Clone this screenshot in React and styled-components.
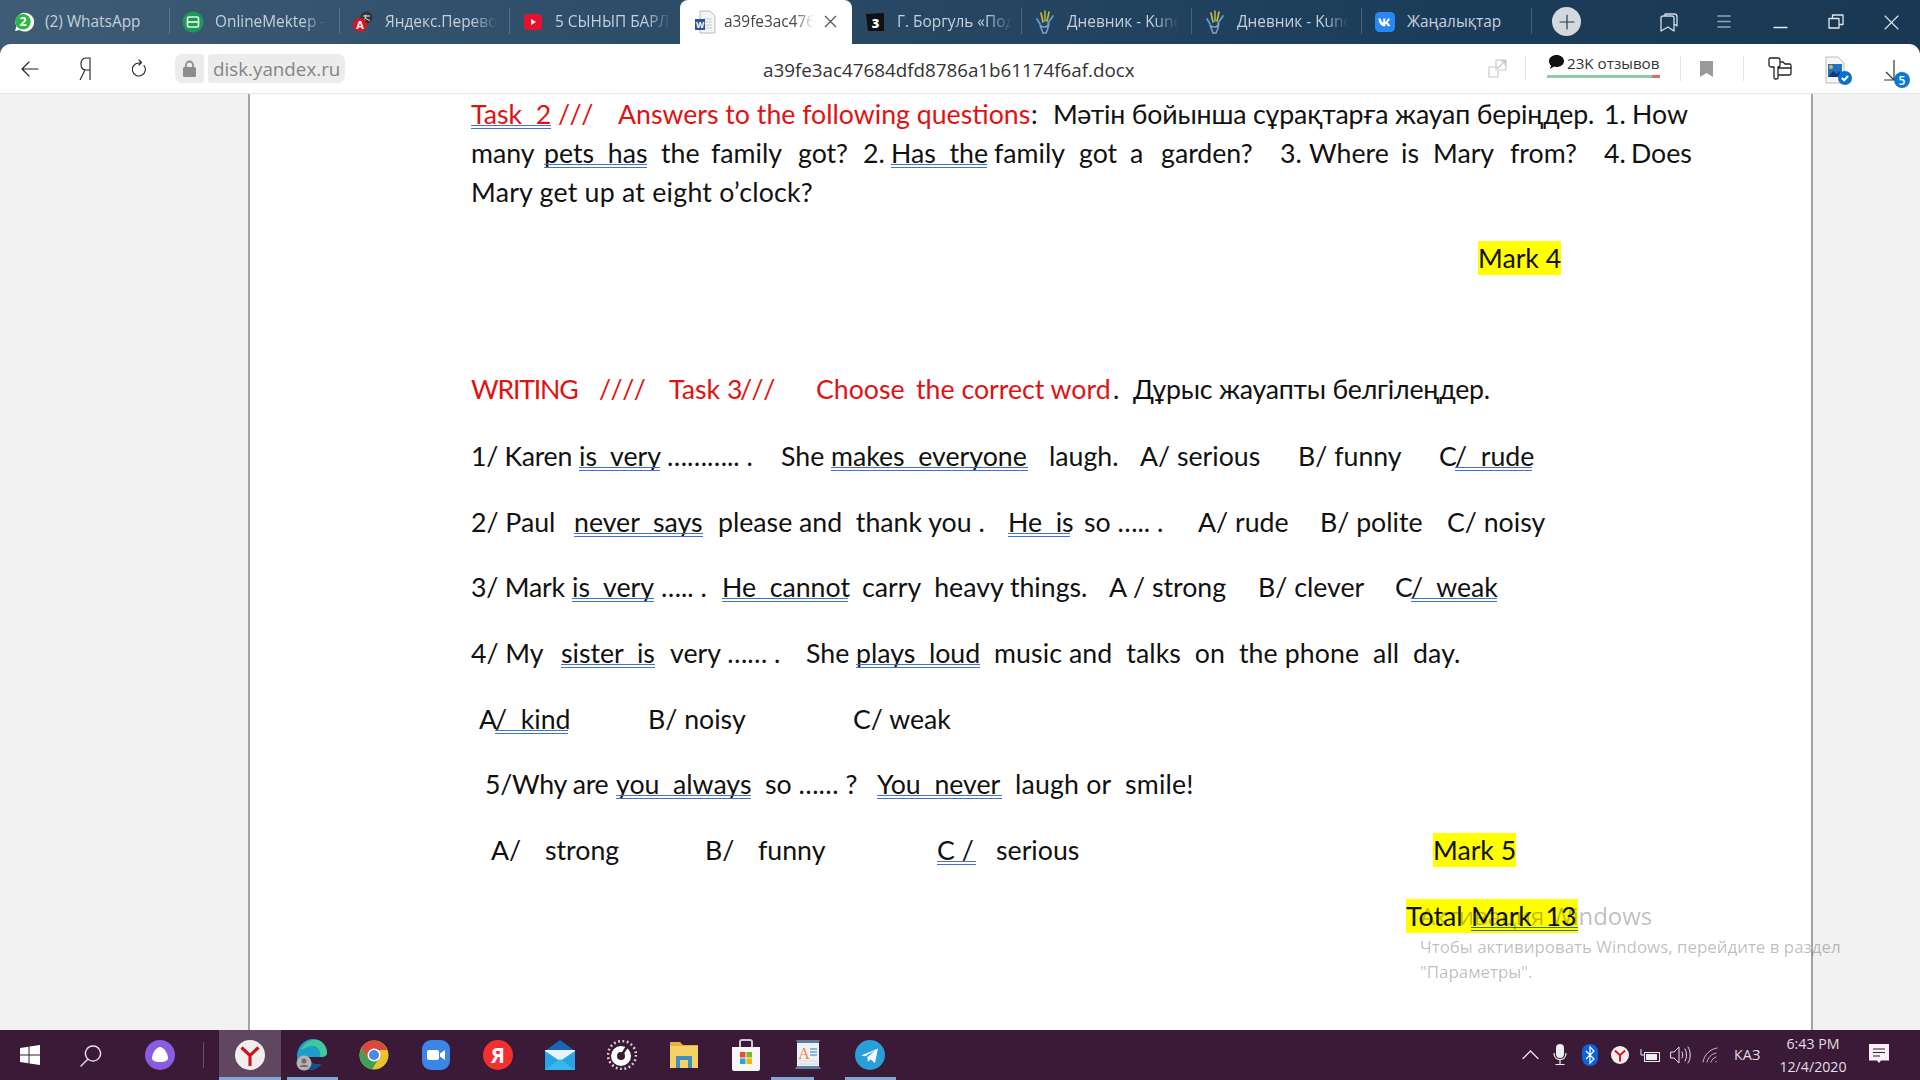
import React from "react";
import styled, { createGlobalStyle, css } from "styled-components";

const Global = createGlobalStyle`
  html, body { margin: 0; padding: 0; width: 1920px; height: 1080px; overflow: hidden; background: #fff; }
  #root { width: 1920px; height: 1080px; }
`;

const Shell = styled.div`
  position: relative; width: 1920px; height: 1080px; overflow: hidden;
  font-family: "Open Sans", "Noto Sans", sans-serif;
  background: linear-gradient(100deg, #3f5c76 0%, #2a4a66 35%, #1b3c59 70%, #1a3853 92%, #232c36 100%);
`;

/* ---------- tab strip ---------- */
const TabBar = styled.div`position: absolute; left: 0; top: 0; width: 1920px; height: 44px; display: flex;`;
const Tab = styled.div`
  position: relative; flex: 0 0 170px; height: 44px; box-sizing: border-box; padding-left: 12px;
  display: flex; align-items: center; gap: 11px; color: #c4d0da; font-size: 15.4px;
  ${p => p.$active && css`
    flex-basis: 172px; background: #fff; color: #444; border-radius: 8px 8px 0 0;
    padding-left: 14px; gap: 8px;
  `}
  ${p => !p.$active && !p.$noSep && css`
    &::after { content: ""; position: absolute; right: 0; top: 8px; height: 26px; width: 1px; background: rgba(255,255,255,.18); }
  `}
`;
const TabIcon = styled.span`flex: 0 0 22px; height: 22px; display: flex; align-items: center; justify-content: center;`;
const TabTitle = styled.span`
  width: ${p => p.$w || 112}px; white-space: nowrap; overflow: hidden; line-height: 22px;
  ${p => p.$fade && css`
    mask-image: linear-gradient(90deg, #000 78%, transparent 100%);
    -webkit-mask-image: linear-gradient(90deg, #000 78%, transparent 100%);
  `}
`;
const TabClose = styled.span`position: absolute; left: 144px; top: 15px; width: 13px; height: 13px; display: flex;`;
const StripIcon = styled.span`position: absolute; left: ${p => p.$x}px; top: ${p => p.$y}px; display: flex;`;
const NewTab = styled.span`
  position: absolute; left: 1552px; top: 7px; width: 29px; height: 29px; border-radius: 50%;
  background: #d3d8dd; display: flex; align-items: center; justify-content: center;
`;

/* ---------- tool bar ---------- */
const Toolbar = styled.div`
  position: absolute; left: 0; top: 44px; width: 1920px; height: 50px; background: #fff;
  border-radius: 11px 11px 0 0; box-sizing: border-box; border-bottom: 1px solid #e6e6e6;
`;
const ToolIcon = styled.span`position: absolute; left: ${p => p.$x}px; top: ${p => p.$y}px; display: flex;`;
const LockPill = styled.span`
  position: absolute; left: 175px; top: 10px; width: 29px; height: 29px; background: #ececec;
  border-radius: 7px 3px 3px 7px; display: flex; align-items: center; justify-content: center;
`;
const DomainPill = styled.span`
  position: absolute; left: 208px; top: 10px; width: 137px; height: 29px; background: #ececec;
  border-radius: 3px 7px 7px 3px; color: #858585; font-size: 18.8px; line-height: 31px; padding-left: 5px; box-sizing: border-box;
`;
const DocName = styled.span`position: absolute; left: 763px; top: 12px; font-size: 18.8px; line-height: 28px; color: #333; white-space: nowrap;`;
const ToolSep = styled.span`position: absolute; left: ${p => p.$x}px; top: 12px; width: 1px; height: 25px; background: #e5e5e5;`;
const Reviews = styled.span`position: absolute; left: 1567px; top: 8px; font-size: 15.2px; line-height: 22px; color: #333; white-space: nowrap;`;
const RatingBar = styled.span`
  position: absolute; left: 1547px; top: 31px; width: 113px; height: 3px;
  background: linear-gradient(90deg, #8ecba5 0 93%, #e46a6a 93% 100%);
`;

/* ---------- page ---------- */
const Viewport = styled.div`position: absolute; left: 0; top: 94px; width: 1920px; height: 936px; background: #f2f2f2;`;
const Page = styled.div`
  position: absolute; left: 248px; top: 0; width: 1565px; height: 936px; box-sizing: border-box;
  background: #fff; border-left: 2px solid #a4a4a4; border-right: 2px solid #a4a4a4;
`;
const Doc = styled.div`position: absolute; left: 0; top: 94px; width: 1920px; height: 936px; font-family: Lato, "Noto Sans", sans-serif; font-size: 26.7px; color: #111;`;
const Line = styled.div`position: absolute; left: 0; top: ${p => p.$c - 17 - 94}px; width: 1920px; height: 34px; line-height: 34px;`;
const Seg = styled.span`
  position: absolute; left: ${p => p.$x}px; top: 0; height: 34px; white-space: pre;
  ${p => p.$w && css`width: ${p.$w}px;`}
  ${p => p.$ls && css`letter-spacing: ${p.$ls}px;`}
  ${p => p.$red && css`color: #e11212;`}
  ${p => p.$hl && css`background: #ffff00;`}
  ${p => p.$sl && css`font-kerning: none; letter-spacing: -0.5px;`}
  ${p => p.$ul && css`
    &::after {
      content: ""; position: absolute; left: 0; right: 0; top: 28px; height: 0;
      border-bottom: 4px double ${p.$hl ? "#3d6e78" : "#4472c4"};
    }
  `}
`;
const Watermark = styled.div`position: absolute; left: 1420px; font-family: "Open Sans", "Noto Sans", sans-serif; color: rgba(0,0,0,.27); white-space: nowrap; pointer-events: none;`;
const WmTitle = styled(Watermark)`top: 805px; font-size: 23.9px; line-height: 34px;`;
const WmText = styled(Watermark)`top: 840px; font-size: 16.9px; line-height: 25px;`;

/* ---------- task bar ---------- */
const Taskbar = styled.div`position: absolute; left: 0; top: 1030px; width: 1920px; height: 50px; background: #3b1a37;`;
const Pinned = styled.div`position: absolute; left: 219px; top: 0; height: 50px; display: flex;`;
const Slot = styled.span`
  position: relative; flex: 0 0 62px; height: 50px; display: flex; align-items: center; justify-content: center;
  ${p => p.$on && css`background: #61465f;`}
  ${p => p.$bar && css`
    &::after { content: ""; position: absolute; left: ${p.$barLeft || 0}px; bottom: 0; height: 3px; width: ${p.$bar}px; background: #7fa8d6; }
  `}
`;
const SysIcon = styled.span`position: absolute; left: ${p => p.$x}px; top: ${p => p.$y}px; display: flex;`;
const TaskSep = styled.span`position: absolute; left: 203px; top: 12px; width: 1px; height: 26px; background: #6c5068;`;
const Lang = styled.span`position: absolute; left: 1734px; top: 12px; color: #e4dce3; font-size: 14.4px; line-height: 26px;`;
const Clock = styled.div`position: absolute; left: 1768px; top: 2px; width: 90px; text-align: center; color: #e4dce3; font-size: 14.2px; line-height: 23px;`;

/* ---------- drawings ---------- */
const Whats = () => <svg width="22" height="22" viewBox="0 0 22 22"><path d="M3 20l1.4-4.6A9.4 9.4 0 1 1 7.6 19z" fill="#fff"/><circle cx="11" cy="10.8" r="7.7" fill="#2cb742"/><text x="11" y="15.2" textAnchor="middle" fontSize="12.5" fontWeight="700" fill="#fff" fontFamily="Open Sans">2</text></svg>;
const Online = () => <svg width="22" height="22" viewBox="0 0 22 22"><circle cx="11" cy="11" r="10.5" fill="#1d9a58"/><rect x="5.5" y="6" width="11" height="10" rx="1.5" fill="none" stroke="#dff3e6" strokeWidth="1.7"/><path d="M5.5 11h11" stroke="#dff3e6" strokeWidth="1.7"/></svg>;
const Translate = () => <svg width="22" height="22" viewBox="0 0 22 22"><circle cx="14.5" cy="6.5" r="6" fill="#333"/><path d="M11 5h7M14 3.500c0 3-1 5-3 6M13 6c1 2 3 3 5 3.500" fill="none" stroke="#eee" strokeWidth="1"/><circle cx="8" cy="14" r="7" fill="#d8141f"/><text x="8" y="18" textAnchor="middle" fontSize="11" fontWeight="700" fill="#fff" fontFamily="Open Sans">A</text></svg>;
const YouTube = () => <svg width="20" height="18" viewBox="0 0 20 18"><rect x="1" y="1" width="18" height="16" rx="4" fill="#e8112d"/><path d="M8 6l5 3-5 3z" fill="#fff"/></svg>;
const WordDoc = () => <svg width="22" height="24" viewBox="0 0 22 24"><path d="M6 1h10l5 5v17H6z" fill="#f5f5f5" stroke="#b9b9b9"/><path d="M9 9h9M9 12h9M9 15h9M9 18h9" stroke="#c9c9c9"/><rect x="1" y="9" width="10" height="11" fill="#2b579a"/><text x="6" y="18" textAnchor="middle" fontSize="8.5" fontWeight="700" fill="#fff" fontFamily="Open Sans">W</text></svg>;
const Black3 = () => <svg width="20" height="20" viewBox="0 0 20 20"><path d="M1 2l18-1v18H3z" fill="#111"/><text x="10.5" y="15.5" textAnchor="middle" fontSize="13" fontWeight="800" fill="#fff" fontFamily="Open Sans">3</text></svg>;
const Hand = () => <svg width="20" height="24" viewBox="0 0 20 24"><path d="M6 3l2 9M14 2l-2 9" stroke="#d8b528" strokeWidth="1.700" strokeLinecap="round"/><path d="M10 1v10" stroke="#8fb36a" strokeWidth="1.700" strokeLinecap="round"/><path d="M18 6l-5 7M2 9l3 5" stroke="#59a6d6" strokeWidth="1.700" strokeLinecap="round"/><path d="M5 15c2 3 8 3 9-2-1 5-1 7-3 10H8C7 20 6 18 5 15z" fill="none" stroke="#7e9fc4" strokeWidth="1.6"/></svg>;
const Vk = () => <svg width="20" height="20" viewBox="0 0 20 20"><rect width="20" height="20" rx="4.5" fill="#2787f5"/><path d="M3.5 6.5h2.4c.3 2.6 1.4 4 2.3 4.2V6.5h2.2v3.3c.9-.1 1.9-1.5 2.3-3.3h2.2c-.4 2-1.6 3.500-2.500 4.100 1 .5 2.300 1.700 2.900 3.700h-2.500c-.5-1.500-1.500-2.400-2.400-2.500v2.500H10C6 14.300 3.700 11.300 3.500 6.500z" fill="#fff"/></svg>;
const Stroke = ({ w, h, d, c = "#222", sw = 1.3 }) => <svg width={w} height={h} viewBox={`0 0 ${w} ${h}`}><path d={d} fill="none" stroke={c} strokeWidth={sw} strokeLinecap="round" strokeLinejoin="round"/></svg>;

const Star = () => <svg width="13" height="13" viewBox="0 0 13 13"><path d="M1 1l11 11M12 1L1 12" stroke="#555" strokeWidth="1.2"/></svg>;
const DocThumb = () => <svg width="30" height="30" viewBox="0 0 30 30"><path d="M3 2h12l6 6v20H3z" fill="#f6f6f6" stroke="#bbb"/><rect x="5" y="9" width="14" height="13" fill="#1f72c4"/><path d="M5 22l5-6 4 3 2-3 3 6z" fill="#0d3f75"/><circle cx="8" cy="12" r="2" fill="#e8b04a"/><circle cx="22" cy="23" r="7" fill="#0b6fcf"/><path d="M18.800 23l2.300 2.300 4-4.300" fill="none" stroke="#fff" strokeWidth="2"/></svg>;
const DownloadBadge = () => <svg width="28" height="30" viewBox="0 0 28 30"><path d="M11 1v20M3 13l8 8 8-8M1 21h10" fill="none" stroke="#333" strokeWidth="1.2"/><circle cx="19" cy="21" r="8" fill="#0b78d8"/><text x="19" y="25.500" textAnchor="middle" fontSize="12" fontWeight="600" fill="#fff" fontFamily="Open Sans">5</text></svg>;
const Bubble = () => <svg width="15" height="14" viewBox="0 0 15 14"><path d="M7.500 0C11.500 0 15 2.400 15 6s-3.500 6-7.500 6c-1 0-1.800-.1-2.500-.4L1 14l1-3.500C.7 9.500 0 7.800 0 6 0 2.400 3.500 0 7.500 0z" fill="#111"/></svg>;

const YRound = ({ s = 30 }) => <svg width={s} height={s} viewBox="0 0 30 30"><circle cx="15" cy="15" r="15" fill="#f2eeee"/><path d="M6.500 7.500L15 15.500 23.500 7.500M15 15.500V26" fill="none" stroke="#c9151e" strokeWidth="3.100"/></svg>;
const AppIcons = {
  edge: <svg width="32" height="32" viewBox="0 0 32 32"><path d="M1 17C1 7 9 0 17 0c9 0 14 7 14 14 0 3-3 4-7 4H13c0 5 5 9 12 7-3 4-7 6-11 6C7 31 1 25 1 17z" fill="#1f9dc9"/><path d="M5 11C8 4 15 0 21 1c6 1 10 7 10 13 0 3-3 4-7 4 2-7-4-12-9-11-4 1-8 3-10 4z" fill="#42c99a"/><path d="M13 18c0 5 5 9 12 7-3 4-7 6-11 6-4 0-8-3-9-7 3 0 6-2 8-6z" fill="#104f95"/><circle cx="8" cy="24" r="7.500" fill="#b7b2b4"/><circle cx="8" cy="22" r="2.500" fill="#6f6b70"/><path d="M3.500 28c1-3 8-3 9 0z" fill="#6f6b70"/></svg>,
  chrome: <svg width="30" height="30" viewBox="0 0 30 30"><circle cx="15" cy="15" r="14.500" fill="#eac12f"/><path d="M15 .5A14.500 14.500 0 0 0 2.500 8L9 19l6-9h13.200A14.500 14.500 0 0 0 15 .5z" fill="#d9483b"/><path d="M2.500 8A14.500 14.500 0 0 0 13 29.500L20 18 9 19z" fill="#3ea055"/><circle cx="15" cy="15" r="6.500" fill="#fff"/><circle cx="15" cy="15" r="5" fill="#4a88e8"/></svg>,
  zoom: <svg width="28" height="30" viewBox="0 0 28 30"><rect width="28" height="30" rx="9" fill="#3a85e6"/><rect x="5" y="10" width="12" height="10" rx="2" fill="#fff"/><path d="M18 13.500l5-3.500v10l-5-3.500z" fill="#fff"/></svg>,
  ya: <svg width="30" height="30" viewBox="0 0 30 30"><circle cx="15" cy="15" r="15" fill="#f23030"/><text x="15" y="22.500" textAnchor="middle" fontSize="21" fontWeight="700" fill="#fff" fontFamily="Open Sans">Я</text></svg>,
  mail: <svg width="32" height="30" viewBox="0 0 32 30"><path d="M1 11L16 0l15 11-15 9z" fill="#1568b5"/><rect x="1" y="10" width="30" height="20" fill="#27a4e3"/><path d="M1 11l15 10 15-10v-1H1z" fill="#e9f5fb"/><path d="M1 30l15-11 15 11z" fill="#3bb6ec"/></svg>,
  gauge: <svg width="30" height="30" viewBox="0 0 30 30"><circle cx="15" cy="15" r="14" fill="none" stroke="#d9d3d9" strokeWidth="2.600" strokeDasharray="1.800 2.600"/><circle cx="14" cy="16" r="10" fill="#fff"/><circle cx="14" cy="16" r="4" fill="#3b1a37"/><path d="M14 16L21 5" stroke="#3b1a37" strokeWidth="2.500"/></svg>,
  folder: <svg width="30" height="28" viewBox="0 0 30 28"><path d="M1 1h10l3 3h15v23H1z" fill="#e9b040"/><rect x="1" y="5" width="28" height="22" fill="#f6d265"/><path d="M7 27V15h16v12h-4v-8h-8v8z" fill="#3d8fc4"/></svg>,
  store: <svg width="30" height="32" viewBox="0 0 30 32"><path d="M9 9V3c0-1 1-2 2-2h8c1 0 2 1 2 2v6" fill="none" stroke="#cfc9cf" strokeWidth="2"/><path d="M1 8h28v22c0 1-1 2-2 2H3c-1 0-2-1-2-2z" fill="#f7f7f7"/><rect x="9" y="13" width="5.500" height="5.500" fill="#e8502a"/><rect x="15.500" y="13" width="5.500" height="5.500" fill="#76b82a"/><rect x="9" y="19.500" width="5.500" height="5.500" fill="#27a4e3"/><rect x="15.500" y="19.500" width="5.500" height="5.500" fill="#f4b400"/></svg>,
  app: <svg width="26" height="30" viewBox="0 0 26 30"><path d="M1 0h24l-1 2v24l2 3H0l2-3V2z" fill="#5f7c9c"/><rect x="2" y="3" width="22" height="23" fill="#eef2f6"/><text x="9" y="19" textAnchor="middle" fontSize="16" fontFamily="Liberation Serif" fill="#e58a3a">A</text><path d="M15 9h7M15 12h7M15 15h7" stroke="#6ea3d4" strokeWidth="1.500"/><path d="M3 21h20M3 24h20" stroke="#cfd8e2"/></svg>,
  tg: <svg width="30" height="30" viewBox="0 0 30 30"><circle cx="15" cy="15" r="15" fill="#2a9ed8"/><path d="M6 15.500L23 8.500l-3 14.500-4.500-3.500-2.500 2.300-.8-4.500 8-7-10 6z" fill="#f2f8fb"/></svg>,
};

const p = v => Math.round(v * 1.2245);

const lines = [
  [93, [
    { x: 385, w: 65, t: "Task  2", red: 1, ul: 1 }, { x: 456, t: "///", red: 1, sl: 1 }, { x: 505, t: "Answers to the following questions", red: 1 },
    { x: 842, t: ":" }, { x: 860, t: "Мәтін бойынша сұрақтарға жауап беріңдер.", ls: -0.15 }, { x: 1310, t: "1." }, { x: 1333, t: "How" },
  ]],
  [125, [
    { x: 385, t: "many" }, { x: 444, w: 84, t: "pets  has", ul: 1 }, { x: 540, t: "the" }, { x: 581, t: "family" }, { x: 652, t: "got?" },
    { x: 705, t: "2." }, { x: 728, w: 78, t: "Has  the", ul: 1 }, { x: 812, t: "family" }, { x: 881, t: "got" }, { x: 923, t: "a" }, { x: 948, t: "garden?" },
    { x: 1045, t: "3." }, { x: 1069, t: "Where" }, { x: 1144, t: "is" }, { x: 1170, t: "Mary" }, { x: 1233, t: "from?" }, { x: 1310, t: "4." }, { x: 1332, t: "Does" },
  ]],
  [157, [{ x: 385, t: "Mary get up at eight o’clock?", ls: 0.25 }]],
  [211, [{ x: 1207, w: 68, t: "Mark 4", hl: 1 }]],
  [318, [
    { x: 385, t: "WRITING", red: 1, ls: -1.2 }, { x: 489, t: "////", red: 1, sl: 1 }, { x: 546, t: "Task 3", red: 1 }, { x: 604, t: "///", red: 1, sl: 1 }, { x: 666, t: "Choose", red: 1 }, { x: 748, t: "the correct word", red: 1 },
    { x: 909, t: "." }, { x: 925, t: "Дұрыс жауапты белгілеңдер.", ls: -0.23 },
  ]],
  [372, [
    { x: 385, t: "1/ Karen", ls: -0.3 }, { x: 473, w: 66, t: "is  very", ul: 1 }, { x: 545, t: "……….. ." }, { x: 638, t: "She" }, { x: 679, w: 161, t: "makes  everyone", ul: 1 },
    { x: 857, t: "laugh." }, { x: 931, t: "A/ serious" }, { x: 1060, t: "B/ funny" }, { x: 1175, t: "C" }, { x: 1188, w: 63, t: "/  rude", ul: 1 },
  ]],
  [426, [
    { x: 385, t: "2/ Paul" }, { x: 469, w: 105, t: "never  says", ul: 1 }, { x: 586, t: "please and  thank you ." }, { x: 823, w: 51, t: "He  is", ul: 1 },
    { x: 885, t: "so ….. ." }, { x: 978, t: "A/ rude" }, { x: 1078, t: "B/ polite" }, { x: 1182, t: "C/ noisy" },
  ]],
  [479, [
    { x: 385, t: "3/ Mark", ls: -0.2 }, { x: 467, w: 67, t: "is  very", ul: 1 }, { x: 540, t: "….. ." }, { x: 590, w: 103, t: "He  cannot", ul: 1 }, { x: 704, t: "carry  heavy things." },
    { x: 906, t: "A / strong" }, { x: 1027, t: "B/ clever" }, { x: 1139, t: "C" }, { x: 1152, w: 70, t: "/  weak", ul: 1 },
  ]],
  [533, [
    { x: 385, t: "4/ My" }, { x: 458, w: 77, t: "sister  is", ul: 1 }, { x: 547, t: "very …… ." }, { x: 658, t: "She" }, { x: 699, w: 101, t: "plays  loud", ul: 1 },
    { x: 812, t: "music and  talks  on  the phone  all  day.", ls: 0.1 },
  ]],
  [587, [{ x: 391, t: "A" }, { x: 404, w: 60, t: "/  kind", ul: 1 }, { x: 529, t: "B/ noisy" }, { x: 697, t: "C/ weak" }]],
  [640, [
    { x: 396, t: "5/Why are", ls: -0.3 }, { x: 503, w: 110, t: "you  always", ul: 1 }, { x: 625, t: "so …… ?" }, { x: 716, w: 102, t: "You  never", ul: 1 }, { x: 829, t: "laugh or  smile!", ls: 0.2 },
  ]],
  [694, [
    { x: 401, t: "A/" }, { x: 445, t: "strong" }, { x: 576, t: "B/" }, { x: 619, t: "funny" }, { x: 765, w: 32, t: "C /", ul: 1 }, { x: 813, t: "serious" }, { x: 1170, w: 68, t: "Mark 5", hl: 1 },
  ]],
  [748, [{ x: 1148, w: 53, t: "Total", hl: 1 }, { x: 1201, w: 87, t: "Mark  13", hl: 1, ul: 1 }]],
];

const tabs = [
  { icon: <Whats />, title: "(2) WhatsApp" },
  { icon: <Online />, title: "OnlineMektep - Онлайн", fade: 1 },
  { icon: <Translate />, title: "Яндекс.Переводчик", fade: 1 },
  { icon: <YouTube />, title: "5 СЫНЫП БАРЛЫҚ", fade: 1, noSep: 1, w: 116 },
  { icon: <WordDoc />, title: "a39fe3ac47684", fade: 1, w: 90, active: 1 },
  { icon: <Black3 />, title: "Г. Боргуль «Подарок", fade: 1, w: 115 },
  { icon: <Hand />, title: "Дневник - Kundelik", fade: 1 },
  { icon: <Hand />, title: "Дневник - Kundelik", fade: 1 },
  { icon: <Vk />, title: "Жаңалықтар" },
];

export default function App() {
  return (
    <Shell>
      <Global />
      <TabBar>
        {tabs.map((t, i) => (
          <Tab key={i} $active={t.active} $noSep={t.noSep}>
            <TabIcon>{t.icon}</TabIcon>
            <TabTitle $fade={t.fade} $w={t.w}>{t.title}</TabTitle>
            {t.active && <TabClose><Star /></TabClose>}
          </Tab>
        ))}
        <NewTab><Stroke w={18} h={18} d="M9 2v14M2 9h14" c="#2d3b48" sw={1.2} /></NewTab>
        <StripIcon $x={1660} $y={11}><Stroke w={20} h={22} c="#d5dde4" d="M5 5V3h9c1.500 0 3 .8 3 2.500V15l-2-1.500M1 7c0-1 1-2 2-2h9c1 0 2 1 2 2v13l-6-4-7 4z" /></StripIcon>
        <StripIcon $x={1717} $y={14}><Stroke w={14} h={15} c="#91a7b7" sw={1.6} d="M1 2h12M1 7.500h12M1 13h12" /></StripIcon>
        <StripIcon $x={1773} $y={26}><Stroke w={15} h={3} c="#e2e8ec" d="M1 1.500h13" /></StripIcon>
        <StripIcon $x={1828} $y={14}><Stroke w={16} h={15} c="#e2e8ec" d="M1 4.500h10V14H1zM4.500 4.500V1H15v9.500h-4" /></StripIcon>
        <StripIcon $x={1884} $y={15}><Stroke w={15} h={15} c="#e2e8ec" sw={1.1} d="M1 1l13 13M14 1L1 14" /></StripIcon>
      </TabBar>

      <Toolbar>
        <ToolIcon $x={20} $y={16}><Stroke w={19} h={18} d="M18 9H2M9 2L2 9l7 7" sw={1.1} /></ToolIcon>
        <ToolIcon $x={79} $y={13}><svg width="12" height="24" viewBox="0 0 12 24"><path d="M11 23V1H7C3.500 1 2 4 2 7s1.500 6 5 6h4M6 13L1 23" fill="none" stroke="#222" strokeWidth="1.100"/></svg></ToolIcon>
        <ToolIcon $x={132} $y={15}><Stroke w={16} h={19} d="M7 1l2.500 2.500L7 6M12 6.500A6.500 6.500 0 1 1 6.500 4H9" sw={1.1} /></ToolIcon>
        <LockPill><svg width="13" height="17" viewBox="0 0 13 17"><path d="M3 8V5a3.500 3.500 0 0 1 7 0v3" fill="none" stroke="#8c8c8c" strokeWidth="1.800"/><rect y="7" width="13" height="10" rx="1.500" fill="#8c8c8c"/></svg></LockPill>
        <DomainPill>disk.yandex.ru</DomainPill>
        <DocName>a39fe3ac47684dfd8786a1b61174f6af.docx</DocName>
        <ToolIcon $x={1488} $y={15}><Stroke w={19} h={19} c="#c6c6c6" d="M1 8h9v10H1zM8 11V1h10v10h-6M11 8l6-6M13 2h4v4" sw={1.100} /></ToolIcon>
        <ToolSep $x={1525} />
        <ToolIcon $x={1549} $y={11}><Bubble /></ToolIcon>
        <Reviews>23K отзывов</Reviews>
        <RatingBar />
        <ToolSep $x={1680} />
        <ToolIcon $x={1700} $y={17}><svg width="13" height="16" viewBox="0 0 13 16"><path d="M0 0h13v16l-6.500-4L0 16z" fill="#9a9a9a"/></svg></ToolIcon>
        <ToolSep $x={1743} />
        <ToolIcon $x={1768} $y={13}><Stroke w={24} h={23} c="#222" d="M2 1h8c1 0 2 1 2 2v5c0 1-1 2-2 2v11c0 1-1 1-2 1H7c-1 0-1-1-1-2V10H3C2 10 1 9 1 8V3c0-1 0-2 1-2zM12 5h3l2 2h5c1 0 1 1 1 2v7c0 1-1 2-2 2H10M11 11h12" /></ToolIcon>
        <ToolIcon $x={1823} $y={11}><DocThumb /></ToolIcon>
        <ToolIcon $x={1883} $y={15}><DownloadBadge /></ToolIcon>
      </Toolbar>

      <Viewport><Page /></Viewport>

      <Doc>
        {lines.map(([y, segs]) => (
          <Line key={y} $c={p(y)}>
            {segs.map((s, i) => (
              <Seg key={i} $x={p(s.x)} $w={s.w ? p(s.w) : undefined} $ls={s.ls} $red={s.red} $ul={s.ul} $hl={s.hl} $sl={s.sl}>{s.t}</Seg>
            ))}
          </Line>
        ))}
        <WmTitle>Активация Windows</WmTitle>
        <WmText>Чтобы активировать Windows, перейдите в раздел<br />"Параметры".</WmText>
      </Doc>

      <Taskbar>
        <SysIcon $x={20} $y={15}><svg width="20" height="20" viewBox="0 0 20 20"><path d="M0 3l8.500-1.200V9.500H0zM9.500 1.600L20 0v9.500H9.500zM0 10.500h8.500v7.700L0 17zM9.500 10.500H20V20L9.500 18.400z" fill="#fff"/></svg></SysIcon>
        <SysIcon $x={80} $y={15}><Stroke w={22} h={22} c="#e8e4e8" d="M13 1a7.500 7.500 0 1 1-.01 0zM8 14L1 21" sw={1.400} /></SysIcon>
        <SysIcon $x={145} $y={10}><svg width="30" height="30" viewBox="0 0 30 30"><circle cx="15" cy="15" r="15" fill="#8a5de0"/><path d="M15 7c4 0 8 7 8 11 0 3-4 4-8 4s-8-1-8-4c0-4 4-11 8-11z" fill="#fff"/></svg></SysIcon>
        <TaskSep />
        <Pinned>
          <Slot $on $bar={62}><YRound /></Slot>
          <Slot $bar={51} $barLeft={6}>{AppIcons.edge}</Slot>
          <Slot>{AppIcons.chrome}</Slot>
          <Slot>{AppIcons.zoom}</Slot>
          <Slot>{AppIcons.ya}</Slot>
          <Slot>{AppIcons.mail}</Slot>
          <Slot>{AppIcons.gauge}</Slot>
          <Slot>{AppIcons.folder}</Slot>
          <Slot>{AppIcons.store}</Slot>
          <Slot $bar={43} $barLeft={-6}>{AppIcons.app}</Slot>
          <Slot $bar={51} $barLeft={6}>{AppIcons.tg}</Slot>
        </Pinned>
        <SysIcon $x={1522} $y={19}><Stroke w={17} h={11} c="#e8e4e8" d="M1 9.500L8.500 2 16 9.500" /></SysIcon>
        <SysIcon $x={1553} $y={14}><svg width="14" height="22" viewBox="0 0 14 22"><rect x="3" y="0" width="8" height="14" rx="4" fill="#eee"/><path d="M1 9c0 4 2.500 6.500 6 6.500S13 13 13 9M7 15.500V20M2.500 20.500h9" fill="none" stroke="#eee" strokeWidth="1.200"/></svg></SysIcon>
        <SysIcon $x={1582} $y={14}><svg width="16" height="22" viewBox="0 0 16 22"><rect width="16" height="22" rx="7.500" fill="#0a63d8"/><path d="M4 7l8 8-4 4V3l4 4-8 8" fill="none" stroke="#fff" strokeWidth="1.200"/></svg></SysIcon>
        <SysIcon $x={1611} $y={16}><YRound s={18} /></SysIcon>
        <SysIcon $x={1640} $y={18}><svg width="20" height="14" viewBox="0 0 20 14"><path d="M1 1v6h3" fill="none" stroke="#eee"/><rect x="4.500" y="4.500" width="15" height="9" fill="none" stroke="#eee"/><rect x="6" y="6" width="11" height="6" fill="#eee"/></svg></SysIcon>
        <SysIcon $x={1670} $y={15}><Stroke w={21} h={20} c="#e8e4e8" sw={1} d="M1 7h3l5-5v16l-5-5H1zM12 7c1 2 1 4 0 6M15 4c2 3 2 9 0 12M18 2c3 4 3 12 0 16" /></SysIcon>
        <SysIcon $x={1702} $y={17}><Stroke w={16} h={17} c="#c9c0c9" sw={1} d="M1 15C2 8 8 2 15 1M5 15c1-4 4-8 9-9M9 15c1-2 2-4 5-5M14 14.500v.5" /></SysIcon>
        <Lang>КАЗ</Lang>
        <Clock>6:43 PM<br />12/4/2020</Clock>
        <SysIcon $x={1869} $y={14}><svg width="20" height="20" viewBox="0 0 20 20"><path d="M0 0h20v16.500h-8l-2 2.500-2-2.500H0z" fill="#f4f0f4"/><path d="M4 5h12M4 8.500h12M4 12h7" stroke="#3b1a37" strokeWidth="1"/></svg></SysIcon>
      </Taskbar>
    </Shell>
  );
}
